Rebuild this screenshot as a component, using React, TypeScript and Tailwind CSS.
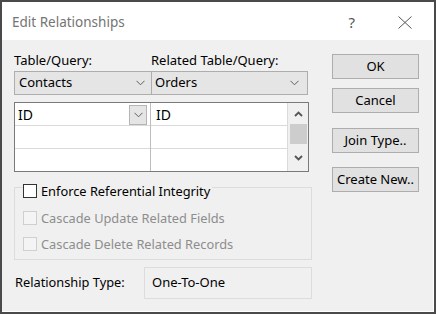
import React from "react";

const font = { fontFamily: '"Noto Sans", "Open Sans", sans-serif' };

function Chevron({ className = "" }: { className?: string }) {
  return (
    <svg width="9" height="6" viewBox="0 0 9 6" className={className}>
      <path d="M0.5 0.8 L4.5 4.8 L8.5 0.8" fill="none" stroke="#5f5f5f" strokeWidth="1" />
    </svg>
  );
}

function BoldChevron({ up }: { up?: boolean }) {
  return (
    <svg width="9" height="6" viewBox="0 0 9 6">
      <path
        d={up ? "M1 5 L4.5 1.5 L8 5" : "M1 1 L4.5 4.5 L8 1"}
        fill="none"
        stroke="#555"
        strokeWidth="1.8"
      />
    </svg>
  );
}

function Btn({ children, className = "" }: { children: React.ReactNode; className?: string }) {
  return (
    <div
      className={
        "h-[25px] w-[87px] border border-[#adadad] bg-[#e1e1e1] flex items-center justify-center text-[13px] text-black " +
        className
      }
    >
      {children}
    </div>
  );
}

function Check({ disabled, label, className = "" }: { disabled?: boolean; label: string; className?: string }) {
  return (
    <div className={"flex items-center h-[16px] " + className}>
      <div
        className={
          "w-[14px] h-[14px] border " +
          (disabled ? "border-[#cfcfcf] bg-[#f4f4f4]" : "border-[#333] bg-white")
        }
      />
      <span className={"ml-[4px] text-[12.8px] leading-[16px] " + (disabled ? "text-[#8d8d8d]" : "text-black")}>
        {label}
      </span>
    </div>
  );
}

export default function App() {
  return (
    <div style={font} className="w-[436px] h-[314px] border-2 border-[#4a4a4a] bg-white flex flex-col overflow-hidden">
      <div className="h-[38px] flex items-center pl-[10px] pr-[20px] shrink-0">
        <span className="text-[13.5px] text-[#747474] leading-[20px] mt-[2px]">Edit Relationships</span>
        <span className="ml-auto text-[15px] text-[#555] mr-[43px] mt-[2px]">?</span>
        <svg width="14" height="13" viewBox="0 0 14 13" className="mr-[2px] mt-[2px]">
          <path d="M0.5 0.5 L13.5 12.5 M13.5 0.5 L0.5 12.5" stroke="#555" strokeWidth="1" fill="none" />
        </svg>
      </div>
      <div className="flex-1 bg-[#f0f0f0] mr-[1px] mb-[1px] flex pl-[12px]">
        {/* left column */}
        <div className="w-[298px] flex flex-col">
          <div className="flex pt-[12px] h-[31px] text-[13px] leading-[16px] text-black">
            <span className="w-[137px]">Table/Query:</span>
            <span>Related Table/Query:</span>
          </div>
          <div className="flex h-[24px]">
            <div className="w-[138px] h-full border border-[#adadad] bg-[#e5e5e5] flex items-center pl-[4px] pr-[6px] text-[13px]">
              <span>Contacts</span>
              <Chevron className="ml-auto" />
            </div>
            <div className="w-[156px] h-full border border-l-0 border-[#adadad] bg-[#e5e5e5] flex items-center pl-[3px] pr-[8px] text-[13px]">
              <span>Orders</span>
              <Chevron className="ml-auto" />
            </div>
          </div>
          <div className="mt-[7px] w-[295px] h-[70px] border border-[#7a7a7a] bg-white flex">
            <div className="w-[136px] flex flex-col border-r border-[#bdbdbd]">
              <div className="h-[23px] border-b border-[#dadada] flex items-center pl-[3px] text-[14px]">
                <span>ID</span>
                <div className="ml-auto mr-[3px] mt-[2px] w-[18px] h-[20px] border border-[#b5b5b5] bg-[#e5e5e5] flex items-center justify-center">
                  <Chevron />
                </div>
              </div>
              <div className="h-[23px] border-b border-[#dadada]" />
              <div className="flex-1" />
            </div>
            <div className="flex-1 flex flex-col border-r border-[#dadada]">
              <div className="h-[23px] border-b border-[#dadada] flex items-center pl-[5px] text-[14px]">
                <span>ID</span>
              </div>
              <div className="h-[23px] border-b border-[#dadada]" />
              <div className="flex-1" />
            </div>
            <div className="w-[20px] bg-[#f0f0f0] flex flex-col items-center">
              <div className="h-[21px] flex items-center justify-center">
                <BoldChevron up />
              </div>
              <div className="w-[17px] h-[20px] bg-[#cdcdcd]" />
              <div className="flex-1 flex items-center justify-center">
                <BoldChevron />
              </div>
            </div>
          </div>
          {/* group box */}
          <div className="mt-[15px] w-[298px] h-[73px] border border-[#dcdcdc] flex flex-col">
            <div className="mt-[-5px] ml-[8px] self-start bg-[#f0f0f0] pr-[2px]">
              <Check label="Enforce Referential Integrity" />
            </div>
            <Check disabled label="Cascade Update Related Fields" className="ml-[8px] mt-[11px]" />
            <Check disabled label="Cascade Delete Related Records" className="ml-[8px] mt-[10px]" />
          </div>
          <div className="mt-[7px] flex items-center h-[32px]">
            <span className="w-[130px] pl-[1px] text-[12.8px]">Relationship Type:</span>
            <div className="w-[168px] h-full border border-[#dcdcdc] flex items-center pl-[7px] text-[13px]">
              One-To-One
            </div>
          </div>
        </div>
        {/* right column */}
        <div className="ml-[20px] flex flex-col pt-[14px]">
          <Btn>OK</Btn>
          <Btn className="mt-[9px]">Cancel</Btn>
          <Btn className="mt-[15px]">Join Type..</Btn>
          <Btn className="mt-[14px]">Create New..</Btn>
        </div>
      </div>
    </div>
  );
}
